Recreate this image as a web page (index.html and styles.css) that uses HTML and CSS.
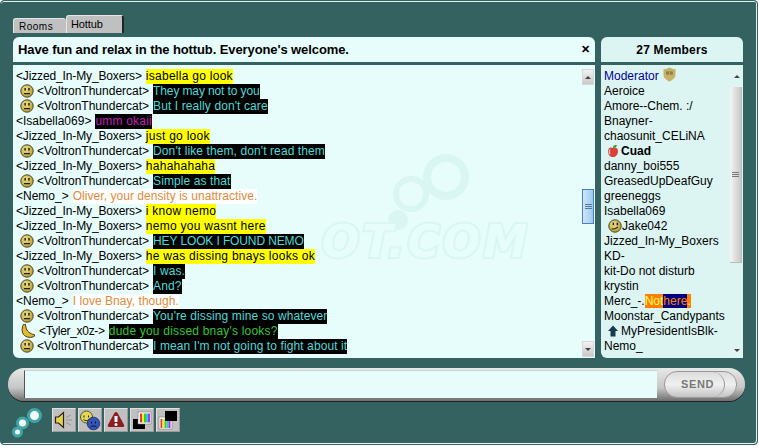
FILE: index.html
```html
<!DOCTYPE html>
<html lang="en">
<head>
    <meta charset="UTF-8">
    <title>Hottub</title>
    <link rel="stylesheet" href="styles.css">
</head>
<body>
    <svg class="defs" width="0" height="0">
        <defs>
            <radialGradient id="smileFill" cx="40%" cy="35%" r="70%">
                <stop offset="0" stop-color="#efe28a"/>
                <stop offset="1" stop-color="#b59a2c"/>
            </radialGradient>
            <symbol id="smile" viewBox="0 0 14 14">
                <circle cx="7" cy="7" r="6.2" fill="url(#smileFill)" stroke="#4b4420" stroke-width="1"/>
                <rect x="4.4" y="4" width="1.5" height="2.6" fill="#222"/>
                <rect x="8.2" y="4" width="1.5" height="2.6" fill="#222"/>
                <path d="M4 9.6h6" stroke="#222" stroke-width="1.1"/>
            </symbol>
            <symbol id="smirk" viewBox="0 0 14 14">
                <circle cx="7" cy="7" r="6.2" fill="url(#smileFill)" stroke="#4b4420" stroke-width="1"/>
                <rect x="4.6" y="3.6" width="1.5" height="2.6" fill="#222"/>
                <rect x="8.6" y="3.6" width="1.5" height="2.6" fill="#222"/>
                <path d="M3.6 9.8c2.4.6 4.6-.2 6.400-2" stroke="#222" stroke-width="1.1" fill="none"/>
            </symbol>
            <symbol id="banana" viewBox="0 0 16 15">
                <path d="M3 0.500l2-.5 1 4c.5 3.500 4 6.500 9 7.500l0 1.500c-3 2-9 2-12-2C1 8 1.500 4 3 0.500z" fill="#e2bb2a" stroke="#3a3010" stroke-width="1"/>
            </symbol>
        </defs>
    </svg>

    <div class="frame">
        <nav class="tabs">
            <span class="tab">Rooms</span>
            <span class="tab tab-active">Hottub</span>
        </nav>

        <div class="main">
            <section class="chat">
                <header class="topic">
                    <span>Have fun and relax in the hottub. Everyone's welcome.</span>
                    <span class="close">&#10005;</span>
                </header>
                <div class="log">
                    <svg class="wm-bubbles" width="100" height="90" viewBox="0 0 100 90">
                        <circle cx="66" cy="29" r="19" fill="#e6fdfc" stroke="#d9f6f3" stroke-width="8"/>
                        <circle cx="31" cy="46" r="15" fill="#e6fdfc" stroke="#d9f6f3" stroke-width="6"/>
                        <circle cx="18" cy="72" r="10" fill="#d9f6f3"/>
                    </svg>
                    <span class="wm-text">OT.COM</span>
                    <ul class="lines">
                        <li class="line"><span class="who who-j">&lt;Jizzed_In-My_Boxers&gt;</span><span class="m-yellow">isabella go look</span></li>
                        <li class="line"><svg class="emo"><use href="#smile"/></svg><span class="who">&lt;VoltronThundercat&gt;</span><span class="m-black m-tight">They may not to you</span></li>
                        <li class="line"><svg class="emo"><use href="#smile"/></svg><span class="who">&lt;VoltronThundercat&gt;</span><span class="m-black">But I really don't care</span></li>
                        <li class="line"><span class="who">&lt;Isabella069&gt;</span><span class="m-purple">umm okaii</span></li>
                        <li class="line"><span class="who who-j">&lt;Jizzed_In-My_Boxers&gt;</span><span class="m-yellow">just go look</span></li>
                        <li class="line"><svg class="emo"><use href="#smile"/></svg><span class="who">&lt;VoltronThundercat&gt;</span><span class="m-black">Don't like them, don't read them</span></li>
                        <li class="line"><span class="who who-j">&lt;Jizzed_In-My_Boxers&gt;</span><span class="m-yellow">hahahahaha</span></li>
                        <li class="line"><svg class="emo"><use href="#smile"/></svg><span class="who">&lt;VoltronThundercat&gt;</span><span class="m-black">Simple as that</span></li>
                        <li class="line"><span class="who">&lt;Nemo_&gt;</span><span class="m-orange">Oliver, your density is unattractive.</span></li>
                        <li class="line"><span class="who who-j">&lt;Jizzed_In-My_Boxers&gt;</span><span class="m-yellow">i know nemo</span></li>
                        <li class="line"><span class="who who-j">&lt;Jizzed_In-My_Boxers&gt;</span><span class="m-yellow">nemo you wasnt here</span></li>
                        <li class="line"><svg class="emo"><use href="#smile"/></svg><span class="who">&lt;VoltronThundercat&gt;</span><span class="m-black m-tight">HEY LOOK I FOUND NEMO</span></li>
                        <li class="line"><span class="who who-j">&lt;Jizzed_In-My_Boxers&gt;</span><span class="m-yellow">he was dissing bnays looks ok</span></li>
                        <li class="line"><svg class="emo"><use href="#smile"/></svg><span class="who">&lt;VoltronThundercat&gt;</span><span class="m-black">I was.</span></li>
                        <li class="line"><svg class="emo"><use href="#smile"/></svg><span class="who">&lt;VoltronThundercat&gt;</span><span class="m-black">And?</span></li>
                        <li class="line"><span class="who">&lt;Nemo_&gt;</span><span class="m-orange">I love Bnay, though.</span></li>
                        <li class="line"><svg class="emo"><use href="#smile"/></svg><span class="who">&lt;VoltronThundercat&gt;</span><span class="m-black">You're dissing mine so whatever</span></li>
                        <li class="line"><svg class="emo emo-wide"><use href="#banana"/></svg><span class="who who-t">&lt;Tyler_x0z-&gt;</span><span class="m-green">dude you dissed bnay's looks?</span></li>
                        <li class="line"><svg class="emo"><use href="#smile"/></svg><span class="who">&lt;VoltronThundercat&gt;</span><span class="m-black">I mean I'm not going to fight about it</span></li>
                    </ul>
                    <div class="scroll scroll-log">
                        <span class="sb-btn"><i class="arrow-up"></i></span>
                        <div class="sb-track sb-track-log"><span class="sb-thumb-blue"><i></i><i></i><i></i></span></div>
                        <span class="sb-btn"><i class="arrow-down"></i></span>
                    </div>
                </div>
            </section>

            <aside class="members">
                <header class="members-head">27 Members</header>
                <div class="members-body">
                    <ul class="names">
                        <li class="name mod">Moderator
                            <svg class="badge" width="13" height="15" viewBox="0 0 13 15"><path d="M.5 2c2 .5 4-.5 6-1.500 2 1 4 2 6 1.500v6c0 3-3 5-6 6.500-3-1.500-6-3.500-6-6.500z" fill="#c6b168"/><path d="M3.500 4.500h6v3h-6z" fill="#6b5a20"/><path d="M5 4.500v3M6.500 4.500v3M8 4.500v3" stroke="#e2d79c" stroke-width=".6"/></svg>
                        </li>
                        <li class="name">Aeroice</li>
                        <li class="name">Amore--Chem. :/</li>
                        <li class="name">Bnayner-</li>
                        <li class="name">chaosunit_CELiNA</li>
                        <li class="name name-icon">
                            <svg class="ico" width="14" height="14" viewBox="0 0 14 14"><path d="M6 4C3.500 2.500 1 4 1 7.500c0 3 2.500 6 5 5.500 2.500.5 5-2.500 5-5.500C11 4 8.500 2.500 6 4z" fill="#d8403a"/><path d="M6 4C5.500 2.500 7 .5 10 1c-.5 2-2 3-4 3z" fill="#2f9a35"/><path d="M3 5.500c-.8 1-.8 3 0 4.500" stroke="#f4c6c0" stroke-width="1.200" fill="none"/></svg>
                            <b>Cuad</b>
                        </li>
                        <li class="name">danny_boi555</li>
                        <li class="name">GreasedUpDeafGuy</li>
                        <li class="name">greeneggs</li>
                        <li class="name">Isabella069</li>
                        <li class="name name-icon"><svg class="ico ico-face"><use href="#smirk"/></svg>Jake042</li>
                        <li class="name">Jizzed_In-My_Boxers</li>
                        <li class="name">KD-</li>
                        <li class="name">kit-Do not disturb</li>
                        <li class="name">krystin</li>
                        <li class="name">Merc_-.<span class="n-orange">Not</span><span class="n-navy">here</span><span class="n-orange">.</span></li>
                        <li class="name">Moonstar_Candypants</li>
                        <li class="name name-icon">
                            <svg class="ico" width="14" height="14" viewBox="0 0 14 14"><path d="M6 1.500l5 5.500H8.500v5.500h-5V7H1z" fill="#173a52"/></svg>
                            MyPresidentIsBlk-
                        </li>
                        <li class="name">Nemo_</li>
                    </ul>
                    <div class="scroll scroll-members">
                        <span class="sb-btn sb-flat sb-tall"><i class="arrow-up"></i></span>
                        <div class="sb-track"><span class="sb-thumb-grey"><i></i><i></i><i></i></span></div>
                        <span class="sb-btn sb-flat"><i class="arrow-down"></i></span>
                    </div>
                </div>
            </aside>
        </div>

        <div class="sendbar">
            <span class="cap-left"></span>
            <input class="msg" type="text">
            <span class="send-wrap"><button class="send">SEND</button></span>
        </div>

        <div class="tools">
            <svg class="logo" width="36" height="36" viewBox="0 0 36 36">
                <circle cx="23.500" cy="8.500" r="6" fill="#f2fbfa" stroke="#3fa5a5" stroke-width="3"/>
                <circle cx="11.500" cy="16" r="5" fill="#f2fbfa" stroke="#3fa5a5" stroke-width="3"/>
                <circle cx="6.500" cy="25" r="4" fill="#f2fbfa" stroke="#3fa5a5" stroke-width="3"/>
            </svg>
            <button class="tool">
                <svg width="20" height="20" viewBox="0 0 20 20"><path d="M1.500 7h3l5-4.500v15l-5-4.500h-3z" fill="#e8d24a" stroke="#222" stroke-width="1.200"/><path d="M12 10h6M12 7.500l5-2.500M12 12.500l5 2.500" stroke="#8a8a8a" stroke-width=".8"/></svg>
            </button>
            <button class="tool">
                <svg width="22" height="22" viewBox="0 0 22 22"><circle cx="7.500" cy="8" r="6" fill="#e5d84e" stroke="#333" stroke-width=".8"/><path d="M5 6.500v2M9.500 6.500v2" stroke="#222"/><path d="M4.500 10.500c1.500 1.500 4 1.500 5.500 0" stroke="#222" fill="none"/><circle cx="14.500" cy="14.500" r="6.300" fill="#3356b8" stroke="#1b2a5e" stroke-width=".8"/><path d="M12.500 12.500v2M16.500 12.500v2" stroke="#0c1330"/><path d="M11.500 18c1.500-1.500 4.500-1.500 6 0" stroke="#0c1330" fill="none"/></svg>
            </button>
            <button class="tool">
                <svg width="20" height="20" viewBox="0 0 20 20"><path d="M10 2c1 0 1.500.8 2 1.700l6 11c.6 1.200.2 2.300-1.200 2.300H3.200C1.800 17 1.400 15.900 2 14.700l6-11C8.500 2.800 9 2 10 2z" fill="#8e1c20"/><path d="M10 6v6" stroke="#fff" stroke-width="3"/><circle cx="10" cy="14.500" r="1.500" fill="#fff"/></svg>
            </button>
            <button class="tool">
                <svg width="20" height="20" viewBox="0 0 20 20"><rect x="1" y="9" width="12" height="10" fill="#000"/><rect x="6" y="2" width="13" height="12" fill="#fff" stroke="#777" stroke-width=".6"/><rect x="8" y="3.500" width="2" height="9" fill="#e33"/><rect x="10" y="3.500" width="2" height="9" fill="#ee3"/><rect x="12" y="3.500" width="2" height="9" fill="#3c3"/><rect x="14" y="3.500" width="2" height="9" fill="#3cc"/><rect x="16" y="3.500" width="2" height="9" fill="#a3e"/></svg>
            </button>
            <button class="tool">
                <svg width="20" height="20" viewBox="0 0 20 20"><rect x="1" y="7" width="13" height="12" fill="#fff" stroke="#777" stroke-width=".6"/><rect x="2.500" y="9" width="2" height="9" fill="#e33"/><rect x="4.500" y="9" width="2" height="9" fill="#ee3"/><rect x="6.500" y="9" width="2" height="9" fill="#3c3"/><rect x="8.500" y="9" width="2" height="9" fill="#3cc"/><rect x="10.500" y="9" width="2" height="9" fill="#a3e"/><rect x="7" y="1" width="12" height="10" fill="#000"/></svg>
            </button>
        </div>
    </div>
</body>
</html>
```

FILE: styles.css
```css
* {
    box-sizing: border-box;
}

html, body {
    margin: 0;
    padding: 0;
    height: 448px;
    overflow: hidden;
    background-color: #ffffff;
}

body {
    font-family: "Liberation Sans", Arial, sans-serif;
    font-size: 12px;
    color: #000000;
}

.defs {
    position: absolute;
}

ul {
    list-style: none;
    margin: 0;
    padding: 0;
}

.frame {
    width: 758px;
    height: 445px;
    padding: 0 14px 0 12px;
    background-color: #336260;
    border: 1px solid #336260;
    border-radius: 4px;
    box-shadow: inset -1px -1px 0 #e8f2f1, inset 0 1px 0 #e8f2f1;
    display: flex;
    flex-direction: column;
}

.tabs {
    display: flex;
    align-items: flex-end;
    height: 32px;
}

.tab {
    width: 53px;
    height: 15px;
    background-color: #c0c0c0;
    border-top: 1px solid #e6e6e6;
    border-left: 1px solid #e6e6e6;
    border-radius: 3px 3px 0 0;
    font-size: 10px;
    letter-spacing: 0.5px;
    line-height: 16px;
    padding-left: 5px;
}

.tab-active {
    width: 58px;
    height: 18px;
    border-right: 2px solid #222222;
    font-size: 11px;
    letter-spacing: -0.1px;
    line-height: 17px;
    padding-left: 4px;
}

.main {
    display: flex;
    gap: 6px;
    margin-top: 4px;
    height: 321px;
}

.chat {
    width: 582px;
    display: flex;
    flex-direction: column;
    gap: 3px;
}

.topic {
    height: 25px;
    padding: 0 4px 0 5px;
    background-color: #e6fdfc;
    border-radius: 6px 6px 0 0;
    display: flex;
    align-items: center;
    justify-content: space-between;
    font-size: 13px;
    letter-spacing: -0.1px;
    font-weight: bold;
}

.close {
    font-size: 11px;
    width: 10px;
}

.log {
    position: relative;
    flex: 1;
    display: flex;
    background-color: #e6fdfc;
    border-radius: 0 0 0 6px;
    overflow: hidden;
}

/* faded logo behind the messages */
.wm-bubbles {
    position: absolute;
    left: 367px;
    top: 83px;
}

.wm-text {
    position: absolute;
    right: 65px;
    top: 161px;
    font-family: "DejaVu Sans", sans-serif;
    font-size: 44px;
    line-height: 32px;
    font-weight: bold;
    font-style: italic;
    letter-spacing: 3px;
    color: #e6fdfc;
    -webkit-text-stroke: 4px #d9f6f3;
    paint-order: stroke fill;
    white-space: nowrap;
}

.lines {
    position: relative;
    flex: 1;
    padding: 4px 0 0 3px;
    letter-spacing: 0.1px;
}

.line {
    height: 15px;
    line-height: 15px;
    white-space: nowrap;
    display: flex;
    gap: 4px;
}

.emo {
    width: 14px;
    height: 14px;
    margin-left: 4px;
    margin-right: -1px;
}

.emo-wide {
    width: 16px;
}

.who {
    flex: none;
    letter-spacing: 0;
}

.who-j {
    letter-spacing: -0.14px;
}

.who-t {
    letter-spacing: -0.3px;
}

.m-yellow {
    background-color: #ffff00;
    color: #000000;
    letter-spacing: 0.27px;
}

.m-black {
    background-color: #000000;
    color: #4fd8d8;
}

.m-tight {
    letter-spacing: -0.12px;
}

.m-purple {
    background-color: #000000;
    color: #c020b8;
    letter-spacing: 0.2px;
}

.m-orange {
    background-color: #ffffff;
    color: #e08a3a;
    letter-spacing: 0.05px;
}

.m-green {
    background-color: #000000;
    color: #33c633;
    letter-spacing: 0.2px;
}

.scroll {
    display: flex;
    flex-direction: column;
    width: 12px;
}

.scroll-log {
    position: relative;
    margin: 4px 1px 1px 0;
}

.scroll-members {
    flex: none;
    width: 13px;
}

.sb-btn {
    height: 16px;
    flex: none;
    background: linear-gradient(#f2f2f2, #c9c9c9);
    border: 1px solid #d8d8d8;
    display: flex;
    align-items: center;
    justify-content: center;
}

.sb-flat {
    background: #dff5f2;
    border: 0;
}

.sb-tall {
    height: 22px;
}

.arrow-up {
    border: 3px solid transparent;
    border-top: 0;
    border-bottom: 3px solid #444444;
}

.arrow-down {
    border: 3px solid transparent;
    border-bottom: 0;
    border-top: 3px solid #444444;
}

.sb-track {
    flex: 1;
    display: flex;
    flex-direction: column;
}

.sb-track-log {
    padding-top: 104px;
}

.sb-thumb-blue {
    height: 35px;
    background: linear-gradient(90deg, #cfe6fa, #9ccbf0);
    border: 1px solid #4b7fb8;
    display: flex;
    flex-direction: column;
    align-items: center;
    justify-content: center;
    gap: 1px;
}

.sb-thumb-blue i,
.sb-thumb-grey i {
    display: block;
    width: 7px;
    height: 1px;
    background-color: #5a7a96;
}

.sb-thumb-grey {
    height: 176px;
    margin-right: 1px;
    background: linear-gradient(90deg, #f6f6f6, #c8c8c8);
    border-right: 1px solid #bbbbbb;
    border-bottom: 1px solid #bbbbbb;
    display: flex;
    flex-direction: column;
    align-items: center;
    justify-content: center;
    gap: 1px;
}

.sb-thumb-grey i {
    background-color: #777777;
}

.members {
    width: 142px;
    display: flex;
    flex-direction: column;
    gap: 3px;
}

.members-head {
    height: 25px;
    background-color: #dcf5f2;
    border-radius: 6px 6px 0 0;
    display: flex;
    align-items: center;
    justify-content: center;
    font-weight: bold;
    letter-spacing: 0.2px;
}

.members-body {
    flex: 1;
    display: flex;
    background-color: #dcf5f2;
    border-radius: 0 0 0 6px;
    overflow: hidden;
}

.names {
    flex: 1;
    padding: 4px 0 0 3px;
}

.name {
    height: 15px;
    line-height: 15px;
    white-space: nowrap;
}

.name-icon {
    display: flex;
    padding-left: 3px;
}

.ico {
    width: 14px;
    height: 14px;
    flex: none;
}

.ico-face {
    margin-left: 1px;
}

.mod {
    color: #000099;
    display: flex;
    gap: 4px;
}

.badge {
    margin-top: -2px;
}

.n-orange {
    background-color: #ff8000;
    color: #ffff66;
}

.n-navy {
    background-color: #000080;
    color: #ff8000;
}

.sendbar {
    display: flex;
    height: 33px;
    margin: 10px -2px 0 -5px;
    background: linear-gradient(#e8e8e8, #c6c6c6 60%, #6e6e6e);
    border-radius: 16px;
    box-shadow: 0 1px 0 #222222;
    padding-top: 2px;
}

.cap-left {
    width: 16px;
    flex: none;
}

.msg {
    flex: 1;
    height: 28px;
    border: 0;
    border-top: 1px solid #c5d5d5;
    border-left: 1px solid #555555;
    background-color: #e6fdfc;
    padding: 0 4px;
}

.send-wrap {
    width: 88px;
    height: 28px;
    flex: none;
    display: flex;
    align-items: center;
    padding-left: 7px;
}

.send {
    position: relative;
    width: 73px;
    height: 27px;
    border: 1px solid #9a9a9a;
    border-radius: 13px;
    background: linear-gradient(#dcdcdc, #f0f0f0 50%, #c4c4c4);
    color: #777777;
    font-family: "Liberation Sans", Arial, sans-serif;
    font-size: 11px;
    font-weight: bold;
    letter-spacing: 0.6px;
    padding: 0 6px 0 0;
}

/* inner curve on the right of the pill */
.send::after {
    content: "";
    position: absolute;
    top: 0;
    bottom: 0;
    right: 11px;
    width: 14px;
    border-right: 1px solid #9a9a9a;
    border-radius: 0 13px 13px 0;
}

.tools {
    display: flex;
    align-items: flex-start;
    gap: 2px;
    margin-top: 7px;
    margin-left: -2px;
}

.logo {
    margin-right: 3px;
    margin-top: -1px;
}

.tool {
    width: 24px;
    height: 24px;
    padding: 0;
    border: 1px solid #9a9a9a;
    border-top-color: #e0e0e0;
    border-left-color: #e0e0e0;
    background-color: #c0c0c0;
    display: flex;
    align-items: center;
    justify-content: center;
}
```
